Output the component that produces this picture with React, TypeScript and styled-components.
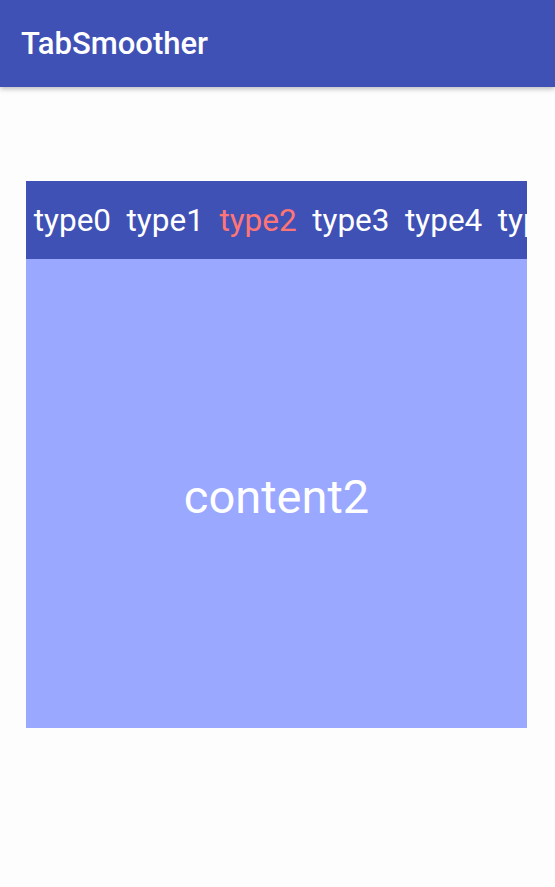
import React from "react";
import styled, { createGlobalStyle } from "styled-components";

const Global = createGlobalStyle`
  html, body { margin: 0; padding: 0; background: #fdfdfd; }
  body { font-family: Roboto, "Noto Sans", sans-serif; }
  #root { width: 555px; min-height: 887px; }
`;

const Page = styled.div`
  width: 555px;
  height: 887px;
  display: flex;
  flex-direction: column;
  background: #fdfdfd;
  overflow: hidden;
`;

const AppBar = styled.header`
  height: 87px;
  flex: none;
  background: #3f51b5;
  display: flex;
  align-items: center;
  padding-left: 21px;
  box-shadow: 0 2px 5px rgba(0, 0, 0, 0.26);
  position: relative;
  z-index: 1;
`;

const Title = styled.h1`
  margin: 0;
  font-family: Roboto, sans-serif;
  font-weight: 500;
  font-size: 31px;
  color: #ffffff;
  letter-spacing: 0;
`;

const Body = styled.main`
  flex: 1;
  padding: 94px 28px 0 26px;
  display: flex;
  flex-direction: column;
`;

const TabStrip = styled.nav`
  height: 78px;
  background: #3f51b5;
  display: flex;
  align-items: center;
  overflow: hidden;
  white-space: nowrap;
`;

const Tab = styled.span<{ $active?: boolean }>`
  flex: none;
  padding: 0 7.75px;
  font-family: Roboto, sans-serif;
  font-size: 31.5px;
  color: ${(p) => (p.$active ? "#ff7575" : "#ffffff")};
  line-height: 1;
  margin-top: 2px;
`;

const Content = styled.section`
  height: 469px;
  background: #9aa8ff;
  display: flex;
  align-items: center;
  justify-content: center;
`;

const ContentText = styled.span`
  font-family: Roboto, sans-serif;
  font-size: 47px;
  color: #ffffff;
  margin-top: 6px;
`;

const tabs = ["type0", "type1", "type2", "type3", "type4", "type5", "type6"];

export default function App() {
  const active = 2;
  return (
    <>
      <Global />
      <Page>
        <AppBar>
          <Title>TabSmoother</Title>
        </AppBar>
        <Body>
          <TabStrip>
            {tabs.map((t, i) => (
              <Tab key={t} $active={i === active}>
                {t}
              </Tab>
            ))}
          </TabStrip>
          <Content>
            <ContentText>content{active}</ContentText>
          </Content>
        </Body>
      </Page>
    </>
  );
}
